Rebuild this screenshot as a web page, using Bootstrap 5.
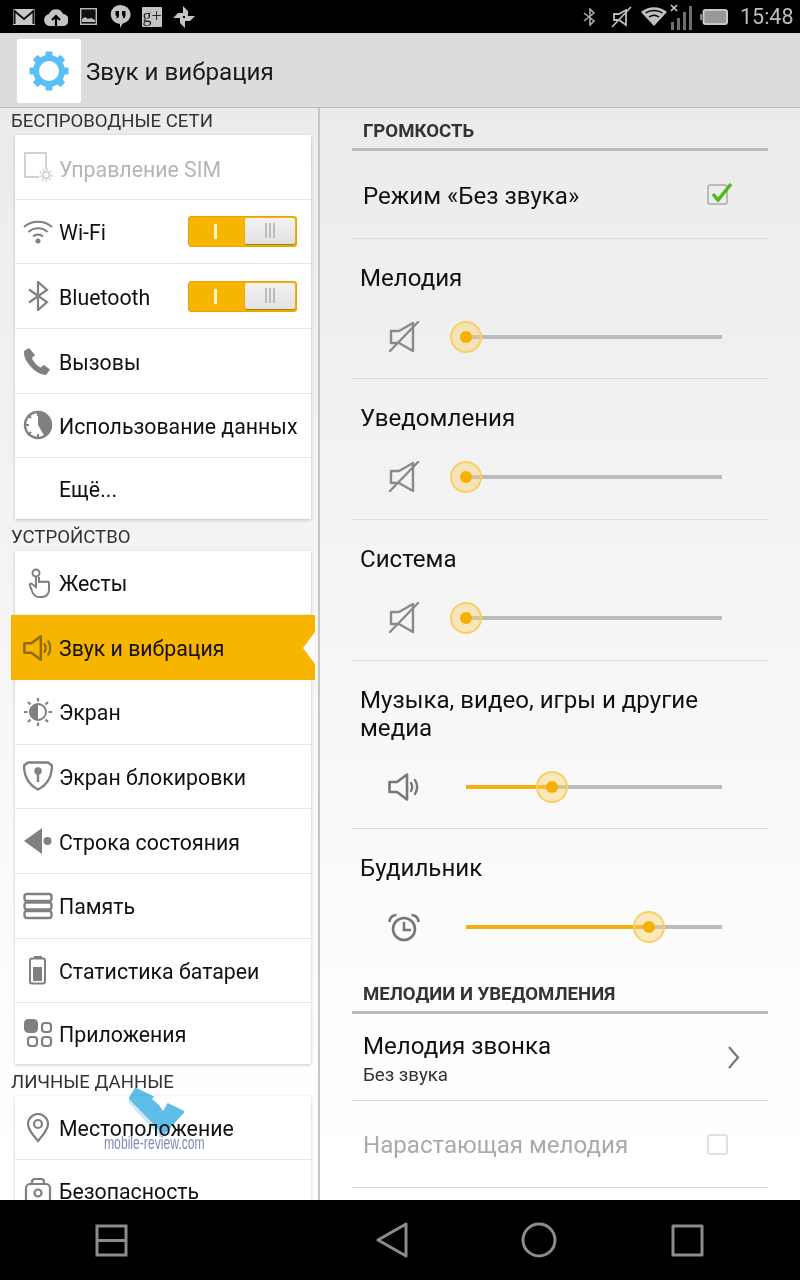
<!DOCTYPE html>
<html lang="ru">

<head>
    <meta charset="UTF-8">
    <meta name="viewport" content="width=device-width, initial-scale=1.0">
    <title>Звук и вибрация</title>
    <link href="https://cdn.jsdelivr.net/npm/bootstrap@5.3.0/dist/css/bootstrap.min.css" rel="stylesheet">
    <style>
        body {
            margin: 0;
            background: #000;
            font-family: Roboto, "Noto Sans", sans-serif;
            color: #111;
        }

        .phone {
            width: 800px;
            height: 1280px;
            overflow: hidden;
        }

        /* status bar */
        .status-bar {
            height: 34px;
            flex: none;
            background: #000;
            border-bottom: 1px solid #d8d8d8;
            color: #b4b4b4;
            padding-left: 8px;
        }

        .status-slot {
            width: 32px;
            height: 33px;
        }

        .status-time {
            font-size: 21.5px;
            color: #bdbdbd;
            width: 72px;
            padding-left: 12px;
            line-height: 33px;
        }

        .gplus {
            width: 20px;
            height: 20px;
            background: #c4c4c4;
            color: #222;
            font-family: "Liberation Serif", serif;
            font-size: 18px;
            line-height: 18px;
            border-radius: 1px;
        }

        /* top bar */
        .app-bar {
            height: 74px;
            flex: none;
            background: #dcdcdc;
            border-bottom: 1px solid #bdbdbd;
            padding-left: 17px;
        }

        .app-tile {
            width: 64px;
            height: 64px;
            background: #fff;
            border-radius: 2px;
        }

        .app-title {
            font-size: 24.2px;
            margin-left: 5px;
            padding-top: 3px;
            color: #1a1a1a;
        }

        .page-body {
            min-height: 0;
            background: linear-gradient(#ebebeb, #fdfdfd 82%, #fff);
        }

        /* left column */
        .side-pane {
            width: 320px;
            flex: none;
            border-right: 2px solid #c6c6c6;
            padding-left: 15px;
            padding-right: 7px;
            overflow: hidden;
        }

        .side-head {
            font-size: 18.6px;
            line-height: 28px;
            margin-left: -4px;
            color: #333;
            text-transform: uppercase;
        }

        .side-head-first {
            line-height: 27px;
        }

        .side-head-next {
            padding-top: 4px;
        }

        .side-list {
            border-radius: 0;
            box-shadow: 0 1px 3px rgba(0, 0, 0, .22);
            overflow: visible;
        }

        .side-item {
            height: 64.65px;
            padding: 0 0 0 8px;
            border: 0;
            border-bottom: 1px solid #e6e6e6;
            font-size: 21.3px;
            color: #111;
            background: #fff;
        }

        .side-item:last-child {
            height: 60.5px;
            border-bottom: 0;
        }

        .side-text {
            padding-top: 3px;
        }

        .side-list-first .side-text {
            padding-top: 4px;
        }

        .side-icon {
            width: 30px;
            height: 30px;
            flex: none;
            margin-right: 6px;
            color: #808080;
        }

        .side-off {
            color: #b5b5b5;
        }

        .side-off .side-text {
            padding-top: 6px;
        }

        .side-off .side-icon {
            color: #d2d2d2;
        }

        .side-on {
            margin: 0 -4px;
            padding-left: 12px;
            background: #f8b500;
            border-bottom: 0;
            position: relative;
            z-index: 1;
        }

        .side-on .side-icon {
            color: #8d6c12;
        }

        /* notch of the selected row */
        .side-on::after {
            content: "";
            position: absolute;
            right: 0;
            top: 17px;
            border-top: 16px solid transparent;
            border-bottom: 16px solid transparent;
            border-right: 12px solid #fbfbfb;
        }

        .toggle-box {
            width: 109px;
            height: 31px;
            margin-left: auto;
            margin-right: 14px;
            background: #f8b500;
            border: 1px solid #dfa50a;
            border-radius: 3px;
        }

        .toggle-on {
            width: 56px;
            padding-right: 3px;
        }

        .toggle-on span {
            width: 3px;
            height: 15px;
            background: #fff3d0;
        }

        .toggle-knob {
            width: 50px;
            margin: 1px 1px 2px 0;
            background: linear-gradient(#f2f2f2, #e2e2e2);
            border-radius: 2px;
            box-shadow: 0 1px 1px rgba(0, 0, 0, .35);
            gap: 2px;
        }

        .toggle-knob span {
            width: 2px;
            height: 15px;
            background: #bdbdbd;
        }

        /* right column */
        .main-pane {
            padding: 0 32px;
            overflow: hidden;
            min-width: 0;
        }

        .group-head {
            height: 43px;
            flex: none;
            padding: 11px 0 0 11px;
            border-bottom: 3px solid #bcbcbc;
            font-size: 18.6px;
            line-height: 24px;
            font-weight: 700;
            color: #333;
            text-transform: uppercase;
        }

        .pref-row {
            height: 87.5px;
            padding: 0 40px 0 11px;
            border-bottom: 1px solid #dcdcdc;
            font-size: 24.1px;
        }

        .pref-row-two {
            height: 86.5px;
            padding-right: 28px;
        }

        .pref-text {
            padding-top: 3px;
        }

        .pref-row-two .pref-text {
            padding-top: 6px;
        }

        .pref-off .pref-text {
            padding-top: 1px;
        }

        .pref-sub {
            font-size: 18.7px;
            line-height: 28px;
            color: #333;
        }

        .pref-main {
            line-height: 30px;
        }

        .pref-off {
            color: #aaa;
        }

        .tick-box {
            width: 21px;
            height: 21px;
            border: 2px solid #bababa;
            border-radius: 3px;
            position: relative;
        }

        .tick-box svg {
            position: absolute;
            left: 1px;
            top: -5px;
        }

        .tick-box-off {
            border-color: #e0e0e0;
        }

        .volume-row {
            padding: 25px 40px 25.7px 8px;
            border-bottom: 1px solid #dcdcdc;
        }

        .volume-row-end {
            padding-bottom: 28.2px;
            border-bottom: 0;
        }

        .volume-label {
            font-size: 24.1px;
            line-height: 28px;
        }

        .volume-line {
            height: 32px;
            margin-top: 29px;
            margin-left: 28px;
        }

        .volume-icon {
            width: 32px;
            height: 32px;
            flex: none;
            color: #777;
            margin-right: 46px;
        }

        .volume-icon-off {
            color: #8a8a8a;
        }

        .slide-track {
            width: 256px;
            height: 4px;
            background: #bcbcbc;
            position: relative;
        }

        .slide-fill {
            height: 4px;
            background: #f3ae12;
        }

        .slide-thumb {
            position: absolute;
            top: -14px;
            width: 32px;
            height: 32px;
            margin-left: -16px;
            border: 2px solid #f8cf62;
            border-radius: 50%;
            background: rgba(248, 207, 98, .4);
        }

        .slide-thumb::after {
            content: "";
            position: absolute;
            left: 8px;
            top: 8px;
            width: 12px;
            height: 12px;
            border-radius: 50%;
            background: #f8b000;
        }

        /* bottom bar */
        .nav-keys {
            height: 80px;
            flex: none;
            background: #000;
            padding-left: 95px;
            color: #8c8c8c;
        }

        .key-back {
            margin-left: 248px;
        }

        .key-home {
            margin-left: 113px;
        }

        .key-recent {
            margin-left: 114px;
        }

        /* watermark lies over the list */
        .stamp-logo {
            position: absolute;
            left: 128px;
            top: 1087px;
            mix-blend-mode: multiply;
        }

        .stamp-text {
            position: absolute;
            left: 104px;
            top: 1134px;
            width: 150px;
            font-family: "Liberation Sans", sans-serif;
            font-size: 18px;
            line-height: 18px;
            color: #8288bd;
            transform: scaleX(.675);
            transform-origin: left center;
            white-space: nowrap;
        }
    </style>
</head>

<body>
    <svg class="d-none">
        <symbol id="i-speaker" viewBox="0 0 32 32">
            <path d="M1.500 11h7.500L19 3.500v25L9 21H1.500z" fill="none" stroke="currentColor" stroke-width="2.600" stroke-linejoin="round"/>
            <path d="M23 12c1.500 2.500 1.500 5.500 0 8M27 9c2.600 4.300 2.600 9.700 0 14" fill="none" stroke="currentColor" stroke-width="2.400" stroke-linecap="round"/>
        </symbol>
        <symbol id="i-mute" viewBox="0 0 32 32">
            <path d="M3 10h8L25 2v28L11 22H3z" fill="none" stroke="currentColor" stroke-width="2.400" stroke-linejoin="round"/>
            <path d="M2 30 30 1" stroke="currentColor" stroke-width="2.400" stroke-linecap="round"/>
        </symbol>
        <symbol id="i-alarm" viewBox="0 0 32 32">
            <circle cx="16" cy="18" r="11" fill="none" stroke="currentColor" stroke-width="2.600"/>
            <path d="M16 11v8h7M1.500 11c0-4 3-7 7-7M30.500 11c0-4-3-7-7-7" fill="none" stroke="currentColor" stroke-width="2.600"/>
        </symbol>
    </svg>

    <div class="phone d-flex flex-column position-relative">

        <!-- Barra de estado -->
        <div class="status-bar d-flex align-items-center">
            <div class="status-slot d-flex align-items-center justify-content-center">
                <svg width="22" height="16" viewBox="0 0 22 16"><path d="M0 0h22v16H0z" fill="#c8c8c8"/><path d="M1.500 15V2l9.500 8 9.500-8v13" fill="none" stroke="#111" stroke-width="2"/></svg>
            </div>
            <div class="status-slot d-flex align-items-center justify-content-center">
                <svg width="24" height="18" viewBox="0 0 24 18"><path d="M6 18a6 6 0 0 1-1-11.900A7.500 7.500 0 0 1 19 6a6 6 0 0 1-.5 12z" fill="#c4c4c4"/><path d="M12 18V9M8 12l4-4 4 4" fill="none" stroke="#000" stroke-width="2.200"/></svg>
            </div>
            <div class="status-slot d-flex align-items-center justify-content-center">
                <svg width="17" height="17" viewBox="0 0 17 17"><rect x=".7" y=".7" width="15.600" height="15.600" fill="#111" stroke="#bbb" stroke-width="1.400"/><path d="M2 14v-3l3-2 3 2 3-1 4 2v2z" fill="#bbb"/></svg>
            </div>
            <div class="status-slot d-flex align-items-center justify-content-center">
                <svg width="21" height="23" viewBox="0 0 21 23"><path d="M10.500 0a10.200 9.500 0 0 1 2 18.800L10 23v-4A9.500 9.500 0 0 1 10.500 0z" fill="#c4c4c4"/><path d="M5.500 6h3.500v4.500C9 12 8 13 6.500 13.500v-3h-1zM12 6h3.500v4.500c0 1.500-1 2.500-2.500 3v-3h-1z" fill="#000"/></svg>
            </div>
            <div class="status-slot d-flex align-items-center justify-content-center">
                <div class="gplus text-center">g+</div>
            </div>
            <div class="status-slot d-flex align-items-center justify-content-center">
                <svg width="22" height="22" viewBox="0 0 22 22"><path d="M10 10V0l5 5v5zM12 10h10l-5 5h-5zM12 12v10l-5-5v-5zM10 12H0l5-5h5z" fill="#c4c4c4"/></svg>
            </div>
            <div class="d-flex align-items-center ms-auto">
                <div class="status-slot d-flex align-items-center justify-content-center">
                    <svg width="14" height="18" viewBox="0 0 14 18"><path d="M1 5l10 8-4 4V1l4 4-10 8" fill="none" stroke="#aaa" stroke-width="1.600"/></svg>
                </div>
                <div class="status-slot d-flex align-items-center justify-content-center">
                    <svg width="22" height="22" viewBox="0 0 22 22"><path d="M3 8h5l7-4v15l-7-5H3z" fill="none" stroke="#bbb" stroke-width="1.800"/><path d="M1 21 20 1" stroke="#bbb" stroke-width="1.800"/></svg>
                </div>
                <div class="status-slot d-flex align-items-center justify-content-center">
                    <svg width="26" height="19" viewBox="0 0 26 19"><path d="M13 19 0 5C7-1.500 19-1.500 26 5z" fill="#c0c0c0"/><path d="M4.500 6C9 2.500 17 2.500 21.500 6M8 10c3-2 7-2 10 0" fill="none" stroke="#000" stroke-width="1.500"/></svg>
                </div>
                <svg width="22" height="26" viewBox="0 0 22 26"><path d="M1 1l6 6M7 1 1 7" stroke="#ccc" stroke-width="1.600"/><path d="M1 18h3v8H1zM7 14h3v12H7zM13 8h3v18h-3zM19 2h3v24h-3z" fill="#6f6f6f"/></svg>
                <svg class="ms-2" width="28" height="16" viewBox="0 0 28 16"><path d="M0 5h2v6H0z" fill="#888"/><rect x="3.500" y="1" width="23.500" height="14" rx="2" fill="#999" stroke="#c8c8c8" stroke-width="2"/></svg>
                <div class="status-time">15:48</div>
            </div>
        </div>

        <!-- Cabecera -->
        <div class="app-bar d-flex align-items-center">
            <div class="app-tile d-flex align-items-center justify-content-center">
                <svg width="40" height="40" viewBox="0 0 40 40" fill="#58c0f6">
                    <circle cx="20" cy="20" r="13" fill="none" stroke="#58c0f6" stroke-width="6"/>
                    <rect x="16.500" y=".5" width="7" height="6" rx="1"/>
                    <rect x="16.500" y=".5" width="7" height="6" rx="1" transform="rotate(45 20 20)"/>
                    <rect x="16.500" y=".5" width="7" height="6" rx="1" transform="rotate(90 20 20)"/>
                    <rect x="16.500" y=".5" width="7" height="6" rx="1" transform="rotate(135 20 20)"/>
                    <rect x="16.500" y=".5" width="7" height="6" rx="1" transform="rotate(180 20 20)"/>
                    <rect x="16.500" y=".5" width="7" height="6" rx="1" transform="rotate(225 20 20)"/>
                    <rect x="16.500" y=".5" width="7" height="6" rx="1" transform="rotate(270 20 20)"/>
                    <rect x="16.500" y=".5" width="7" height="6" rx="1" transform="rotate(315 20 20)"/>
                </svg>
            </div>
            <div class="app-title">Звук и вибрация</div>
        </div>

        <div class="page-body d-flex flex-grow-1">

            <!-- Menu -->
            <div class="side-pane">
                <div class="side-head side-head-first">Беспроводные сети</div>
                <div class="list-group side-list side-list-first">
                    <div class="list-group-item d-flex align-items-center side-item side-off">
                        <svg class="side-icon" viewBox="0 0 30 30" fill="none" stroke="currentColor" stroke-width="2"><path d="M16 25H2V1h21v16"/><circle cx="23" cy="23" r="3.500"/><circle cx="23" cy="23" r="6" stroke-width="1.500" stroke-dasharray="2 2"/></svg>
                        <span class="side-text">Управление SIM</span>
                    </div>
                    <div class="list-group-item d-flex align-items-center side-item">
                        <svg class="side-icon" viewBox="0 0 30 30" fill="none" stroke="currentColor" stroke-width="2"><path d="M1 11c8-7 20-7 28 0M5.500 16c5.500-5 13.500-5 19 0M10 20.500c3-2.500 7-2.500 10 0"/><circle cx="15" cy="25" r="2.500" fill="currentColor" stroke="none"/></svg>
                        <span class="side-text">Wi-Fi</span>
                        <div class="toggle-box d-flex">
                            <div class="toggle-on d-flex align-items-center justify-content-center"><span></span></div>
                            <div class="toggle-knob d-flex align-items-center justify-content-center"><span></span><span></span><span></span></div>
                        </div>
                    </div>
                    <div class="list-group-item d-flex align-items-center side-item">
                        <svg class="side-icon" viewBox="0 0 30 30" fill="none" stroke="currentColor" stroke-width="2.200"><path d="M6 8.500 24 21l-9 8V1l9 8L6 21.500"/></svg>
                        <span class="side-text">Bluetooth</span>
                        <div class="toggle-box d-flex">
                            <div class="toggle-on d-flex align-items-center justify-content-center"><span></span></div>
                            <div class="toggle-knob d-flex align-items-center justify-content-center"><span></span><span></span><span></span></div>
                        </div>
                    </div>
                    <div class="list-group-item d-flex align-items-center side-item">
                        <svg class="side-icon" viewBox="0 0 30 30" fill="currentColor"><path d="M6 2 1 5c-.5 6 3 12 8 17s11 7.500 14.500 6.500l3.500-5-6-4.500-3.500 2.500c-2-.5-7.500-6-8.500-9.500l3-3z"/></svg>
                        <span class="side-text">Вызовы</span>
                    </div>
                    <div class="list-group-item d-flex align-items-center side-item">
                        <svg class="side-icon" viewBox="0 0 30 30"><path d="M15 1a14 14 0 0 1 7 26L15 15z" fill="currentColor"/><circle cx="15" cy="15" r="13" fill="none" stroke="currentColor" stroke-width="2.400"/><path d="M15 1v5M1 15h5M5 25l3-3M15 29v-5M5 5l3 3" stroke="currentColor" stroke-width="2"/></svg>
                        <span class="side-text">Использование данных</span>
                    </div>
                    <div class="list-group-item d-flex align-items-center side-item">
                        <span class="side-icon"></span>
                        <span class="side-text">Ещё...</span>
                    </div>
                </div>

                <div class="side-head side-head-next">Устройство</div>
                <div class="list-group side-list">
                    <div class="list-group-item d-flex align-items-center side-item">
                        <svg class="side-icon" viewBox="0 0 30 30" fill="none" stroke="currentColor" stroke-width="2"><circle cx="13" cy="5" r="3.500"/><path d="M13 8.500V19l-4-3c-1.500-1-3 .5-2 2l2 5c1 3 3 6 7 6h3c4 0 7-3 7-7v-7c0-2-3-2-3 0 0-2-3-2-3 0 0-2-4-2-4 0v-6"/></svg>
                        <span class="side-text">Жесты</span>
                    </div>
                    <div class="list-group-item d-flex align-items-center side-item side-on">
                        <svg class="side-icon"><use href="#i-speaker"/></svg>
                        <span class="side-text">Звук и вибрация</span>
                    </div>
                    <div class="list-group-item d-flex align-items-center side-item">
                        <svg class="side-icon" viewBox="0 0 30 30"><circle cx="15" cy="15" r="8" fill="none" stroke="currentColor" stroke-width="2"/><path d="M15 7a8 8 0 0 0 0 16z" fill="currentColor"/><path d="M15 1v3.500M15 25.500V29M1 15h3.500M25.500 15H29M5 5l2.500 2.500M22.500 22.500 25 25M25 5l-2.500 2.500M7.500 22.500 5 25" stroke="currentColor" stroke-width="2.200"/></svg>
                        <span class="side-text">Экран</span>
                    </div>
                    <div class="list-group-item d-flex align-items-center side-item">
                        <svg class="side-icon" viewBox="0 0 30 30" fill="none" stroke="currentColor" stroke-width="2.400"><path d="M5 1.500h20l4 3c0 11-4 19-14 24C5 23.500 1 15.500 1 4.500z"/><circle cx="15" cy="10" r="2.500" fill="currentColor"/><path d="M15 12v9"/></svg>
                        <span class="side-text">Экран блокировки</span>
                    </div>
                    <div class="list-group-item d-flex align-items-center side-item">
                        <svg class="side-icon" viewBox="0 0 30 30" fill="currentColor"><path d="M1 15 19 2v26z"/><circle cx="24.500" cy="15" r="4"/></svg>
                        <span class="side-text">Строка состояния</span>
                    </div>
                    <div class="list-group-item d-flex align-items-center side-item">
                        <svg class="side-icon" viewBox="0 0 30 30" fill="none" stroke="currentColor" stroke-width="2.400"><rect x="1.500" y="3" width="27" height="7" rx="2.500"/><rect x="1.500" y="11.500" width="27" height="7" rx="2.500"/><rect x="1.500" y="20" width="27" height="7" rx="2.500"/></svg>
                        <span class="side-text">Память</span>
                    </div>
                    <div class="list-group-item d-flex align-items-center side-item">
                        <svg class="side-icon" viewBox="0 0 30 30"><path d="M11 1h8v3h-8z" fill="currentColor"/><rect x="7" y="3.500" width="15" height="25" rx="2" fill="none" stroke="currentColor" stroke-width="2"/><rect x="10" y="12" width="9" height="14" fill="currentColor"/></svg>
                        <span class="side-text">Статистика батареи</span>
                    </div>
                    <div class="list-group-item d-flex align-items-center side-item">
                        <svg class="side-icon" viewBox="0 0 30 30"><rect x="1" y="1" width="14" height="14" rx="4.500" fill="currentColor"/><g fill="none" stroke="currentColor" stroke-width="2.200"><rect x="19" y="5" width="9" height="9" rx="3"/><rect x="5" y="19" width="9" height="9" rx="3"/><rect x="19" y="19" width="9" height="9" rx="3"/></g></svg>
                        <span class="side-text">Приложения</span>
                    </div>
                </div>

                <div class="side-head side-head-next">Личные данные</div>
                <div class="list-group side-list">
                    <div class="list-group-item d-flex align-items-center side-item">
                        <svg class="side-icon" viewBox="0 0 30 30" fill="none" stroke="currentColor" stroke-width="2.200"><path d="M15 28C9 21 5 16 5 11a10 10 0 0 1 20 0c0 5-4 10-10 17z"/><circle cx="15" cy="11" r="4"/></svg>
                        <span class="side-text">Местоположение</span>
                    </div>
                    <div class="list-group-item d-flex align-items-center side-item">
                        <svg class="side-icon" viewBox="0 0 30 30" fill="none" stroke="currentColor" stroke-width="2.200"><rect x="3" y="8" width="24" height="20" rx="4"/><path d="M9 8V6a3 3 0 0 1 3-3h6a3 3 0 0 1 3 3v2"/><circle cx="15" cy="17" r="3.500"/></svg>
                        <span class="side-text">Безопасность</span>
                    </div>
                </div>
            </div>

            <!-- Ajustes -->
            <div class="main-pane flex-grow-1">
                <div class="group-head">Громкость</div>
                <div class="pref-row d-flex align-items-center justify-content-between">
                    <span class="pref-text">Режим «Без звука»</span>
                    <div class="tick-box">
                        <svg width="23" height="23" viewBox="0 0 23 23"><path d="M3 13l5 6L21 3" fill="none" stroke="#4fb81a" stroke-width="3.400"/></svg>
                    </div>
                </div>

                <div class="volume-row">
                    <div class="volume-label">Мелодия</div>
                    <div class="volume-line d-flex align-items-center">
                        <svg class="volume-icon volume-icon-off"><use href="#i-mute"/></svg>
                        <div class="slide-track"><div class="slide-thumb" style="left: 0%"></div></div>
                    </div>
                </div>
                <div class="volume-row">
                    <div class="volume-label">Уведомления</div>
                    <div class="volume-line d-flex align-items-center">
                        <svg class="volume-icon volume-icon-off"><use href="#i-mute"/></svg>
                        <div class="slide-track"><div class="slide-thumb" style="left: 0%"></div></div>
                    </div>
                </div>
                <div class="volume-row">
                    <div class="volume-label">Система</div>
                    <div class="volume-line d-flex align-items-center">
                        <svg class="volume-icon volume-icon-off"><use href="#i-mute"/></svg>
                        <div class="slide-track"><div class="slide-thumb" style="left: 0%"></div></div>
                    </div>
                </div>
                <div class="volume-row">
                    <div class="volume-label">Музыка, видео, игры и другие медиа</div>
                    <div class="volume-line d-flex align-items-center">
                        <svg class="volume-icon"><use href="#i-speaker"/></svg>
                        <div class="slide-track"><div class="slide-fill" style="width: 33.600%"></div><div class="slide-thumb" style="left: 33.600%"></div></div>
                    </div>
                </div>
                <div class="volume-row volume-row-end">
                    <div class="volume-label">Будильник</div>
                    <div class="volume-line d-flex align-items-center">
                        <svg class="volume-icon"><use href="#i-alarm"/></svg>
                        <div class="slide-track"><div class="slide-fill" style="width: 71.500%"></div><div class="slide-thumb" style="left: 71.500%"></div></div>
                    </div>
                </div>

                <div class="group-head">Мелодии и уведомления</div>
                <div class="pref-row pref-row-two d-flex align-items-center justify-content-between">
                    <div class="pref-text">
                        <div class="pref-main">Мелодия звонка</div>
                        <div class="pref-sub">Без звука</div>
                    </div>
                    <svg width="13" height="25" viewBox="0 0 13 25"><path d="M2 2l9 10.500L2 23" fill="none" stroke="#777" stroke-width="2.200"/></svg>
                </div>
                <div class="pref-row pref-off d-flex align-items-center justify-content-between">
                    <span class="pref-text">Нарастающая мелодия</span>
                    <div class="tick-box tick-box-off"></div>
                </div>
            </div>
        </div>

        <!-- Teclas -->
        <div class="nav-keys d-flex align-items-center">
            <svg width="33" height="33" viewBox="0 0 33 33" fill="none" stroke="currentColor" stroke-width="3"><path d="M2 2h29v29H2zM2 16.500h29"/></svg>
            <svg class="key-back" width="32" height="36" viewBox="0 0 32 36" fill="none" stroke="currentColor" stroke-width="3" stroke-linejoin="round"><path d="M30 2v32L2 18z"/></svg>
            <svg class="key-home" width="36" height="36" viewBox="0 0 36 36" fill="none" stroke="currentColor" stroke-width="3"><circle cx="18" cy="18" r="16"/></svg>
            <svg class="key-recent" width="33" height="33" viewBox="0 0 33 33" fill="none" stroke="currentColor" stroke-width="3" stroke-linejoin="round"><path d="M2 2h29v29H2z"/></svg>
        </div>

        <!-- Marca de agua -->
        <svg class="stamp-logo" width="58" height="52" viewBox="0 0 58 52">
            <polygon points="1,11 1,16 33,51 37,48" fill="#cfe6f6"/>
            <polygon points="8,3 54,25 36,45 3,11" fill="#5fbdea" stroke="#5fbdea" stroke-width="4" stroke-linejoin="round"/>
            <polygon points="24,12 28,7 42,12 35,24 31,18" fill="#fff"/>
        </svg>
        <div class="stamp-text">mobile-review.com</div>
    </div>

    <script src="https://cdn.jsdelivr.net/npm/bootstrap@5.3.0/dist/js/bootstrap.bundle.min.js"></script>
</body>

</html>
